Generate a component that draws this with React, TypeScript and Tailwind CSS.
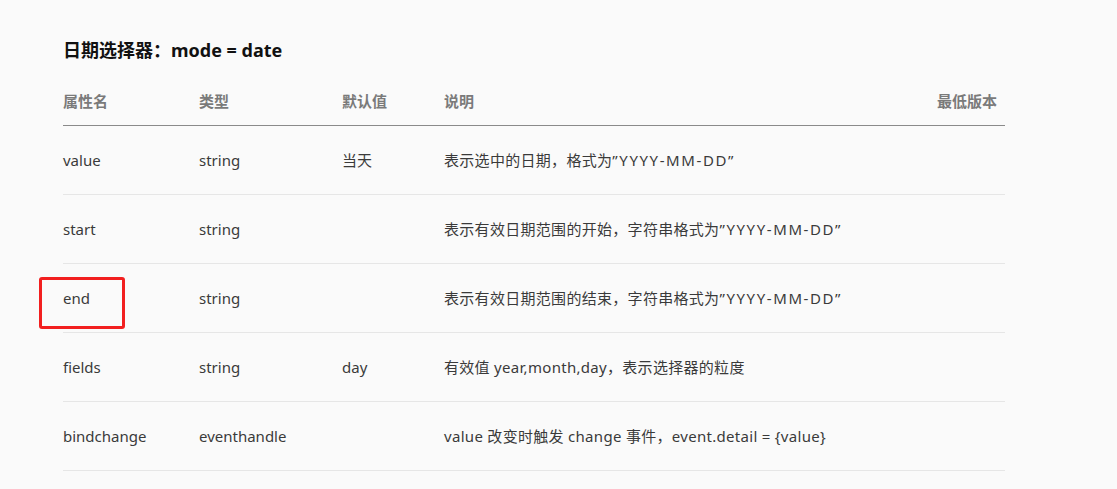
const rows = [
  { name: 'value', type: 'string', def: '当天', desc: '表示选中的日期，格式为', fmt: true },
  { name: 'start', type: 'string', def: '', desc: '表示有效日期范围的开始，字符串格式为', fmt: true },
  { name: 'end', type: 'string', def: '', desc: '表示有效日期范围的结束，字符串格式为', fmt: true, marked: true },
  { name: 'fields', type: 'string', def: 'day', desc: '有效值 year,month,day，表示选择器的粒度' },
  { name: 'bindchange', type: 'eventhandle', def: '', desc: 'value 改变时触发 change 事件，event.detail = {value}' },
]

const cols = 'grid grid-cols-[136px_143px_102px_1fr_120px]'

export default function App() {
  return (
    <div
      className="min-h-screen bg-[#fafafa] pl-[63px] pt-[38px] text-[15px]"
      style={{ fontFamily: '"Noto Sans", "Noto Sans CJK SC", sans-serif' }}
    >
      <div className="w-[942px]">
        <h2 className="text-[18px] leading-6 font-bold text-[#111]">日期选择器：mode = date</h2>

        {/* 表头 */}
        <div className={`${cols} mt-4 h-12 items-center border-b border-[#8a8a8a] font-bold text-[#7a7a7a]`}>
          <span>属性名</span>
          <span>类型</span>
          <span>默认值</span>
          <span>说明</span>
          <span className="text-right pr-2">最低版本</span>
        </div>

        {rows.map((r) => (
          <div
            key={r.name}
            className={`${cols} relative h-[69px] items-center border-b border-[#e6e6e6] text-[#3a3a3a]`}
          >
            <span>{r.name}</span>
            <span>{r.type}</span>
            <span>{r.def}</span>
            <span className="col-span-2 tracking-[0.3px]">
              {r.desc}
              {r.fmt && <span className="tracking-[1.6px]">”YYYY-MM-DD”</span>}
            </span>
            {r.marked && (
              <div className="absolute left-[-24px] top-[13px] w-[86px] h-[52px] border-[3px] border-[#f21f1f] rounded-[3px] pointer-events-none" />
            )}
          </div>
        ))}
      </div>
    </div>
  )
}
